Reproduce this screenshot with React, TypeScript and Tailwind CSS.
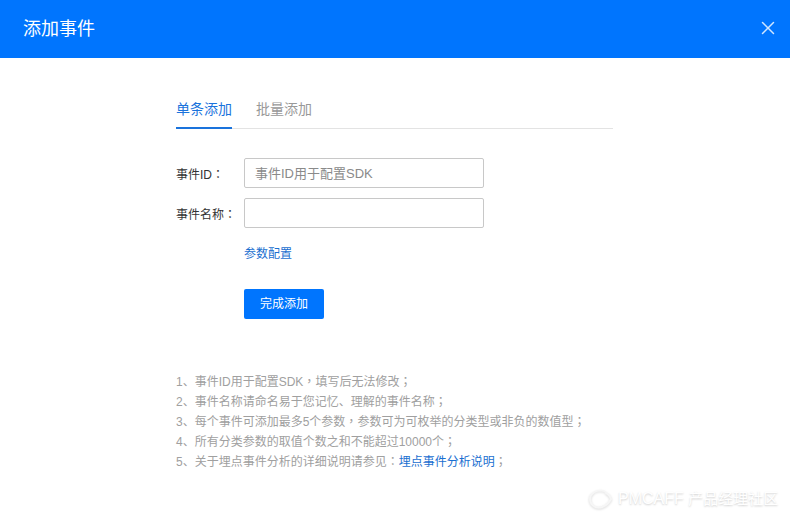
import React from 'react'
import { X } from 'lucide-react'

const font = "font-['Liberation_Sans','Noto_Sans_CJK_SC',sans-serif]"

// centred full-width punctuation, as in the screenshot
function P({ children }: { children: React.ReactNode }) {
  return <span className="font-['Noto_Sans_CJK_TC',sans-serif] leading-[0]">{children}</span>
}

export default function App() {
  return (
    <div className={`relative h-[519px] w-[790px] overflow-hidden bg-white ${font}`}>
      <header className="flex h-[58px] items-center justify-between bg-[#0075fe] pl-[23px] pr-[11px]">
        <h1 className="text-[18px] text-white">添加事件</h1>
        <X className="mb-[3px] h-[22px] w-[22px] text-[#cfe6ff]" strokeWidth={1.6} />
      </header>

      <main className="ml-[176px] w-[437px] pt-[41px]">
        <div className="flex h-[30px] gap-[24px] border-b border-[#e3e3e3] text-[14px] leading-[20px]">
          <div className="h-[30px] border-b-2 border-[#1a73dc] text-[#1a73dc]">单条添加</div>
          <div className="text-[#999999]">批量添加</div>
        </div>

        <form className="mt-[29px] flex flex-col gap-[10px] text-[12px]">
          <div className="flex items-center">
            <label className="w-[68px] pt-[4px] text-[#333333]">
              事件ID<P>：</P>
            </label>
            <input
              className="h-[30px] w-[240px] rounded-[2px] border border-[#c8c8c8] px-[10px] text-[13px] outline-none placeholder:text-[#8a8a8a]"
              placeholder="事件ID用于配置SDK"
            />
          </div>
          <div className="flex items-center">
            <label className="w-[68px] pt-[4px] text-[#333333]">
              事件名称<P>：</P>
            </label>
            <input className="h-[30px] w-[240px] rounded-[2px] border border-[#c8c8c8] px-[10px] text-[13px] outline-none" />
          </div>
          <div className="ml-[68px] mt-[7px] leading-[18px]">
            <a className="text-[#1a6fd0]">参数配置</a>
          </div>
          <div className="ml-[68px] mt-[16px]">
            <button type="button" className="h-[30px] w-[80px] rounded-[2px] bg-[#0075fe] text-[12px] text-white">
              完成添加
            </button>
          </div>
        </form>

        <ol className="mt-[53px] whitespace-nowrap text-[12px] leading-[20px] text-[#a0a0a0]">
          <li>
            1、事件ID用于配置SDK<P>，</P>填写后无法修改<P>；</P>
          </li>
          <li>
            2、事件名称请命名易于您记忆、理解的事件名称<P>；</P>
          </li>
          <li>
            3、每个事件可添加最多5个参数<P>，</P>参数可为可枚举的分类型或非负的数值型<P>；</P>
          </li>
          <li>
            4、所有分类参数的取值个数之和不能超过10000个<P>；</P>
          </li>
          <li>
            5、关于埋点事件分析的详细说明请参见<P>：</P>
            <a className="text-[#1a6fd0]">埋点事件分析说明</a>
            <P>；</P>
          </li>
        </ol>
      </main>

      {/* watermark */}
      <div className="absolute left-[588px] top-[489px] flex items-center gap-[6px] leading-[20px] text-white [text-shadow:0_1px_2px_rgba(0,0,0,0.2)]">
        <svg width="24" height="20" viewBox="0 0 24 20" fill="none" className="drop-shadow-[0_1px_1px_rgba(0,0,0,0.15)]">
          <path d="M5 4C1 7 1 13 5 16.500c3 2.500 6 2.500 9 1.500c4-1.500 7-4 9-8c-1-3-2.500-5-5-6" stroke="#f6f6f6" strokeWidth="2" strokeLinecap="round" />
          <path d="M5 4c3-2.500 9-3.500 12-1.500" stroke="#f6f6f6" strokeWidth="1.500" strokeLinecap="round" />
        </svg>
        <span className="whitespace-nowrap text-[16px]">
          PMCAFF <span className="text-[15px]">产品经理社区</span>
        </span>
      </div>
    </div>
  )
}
